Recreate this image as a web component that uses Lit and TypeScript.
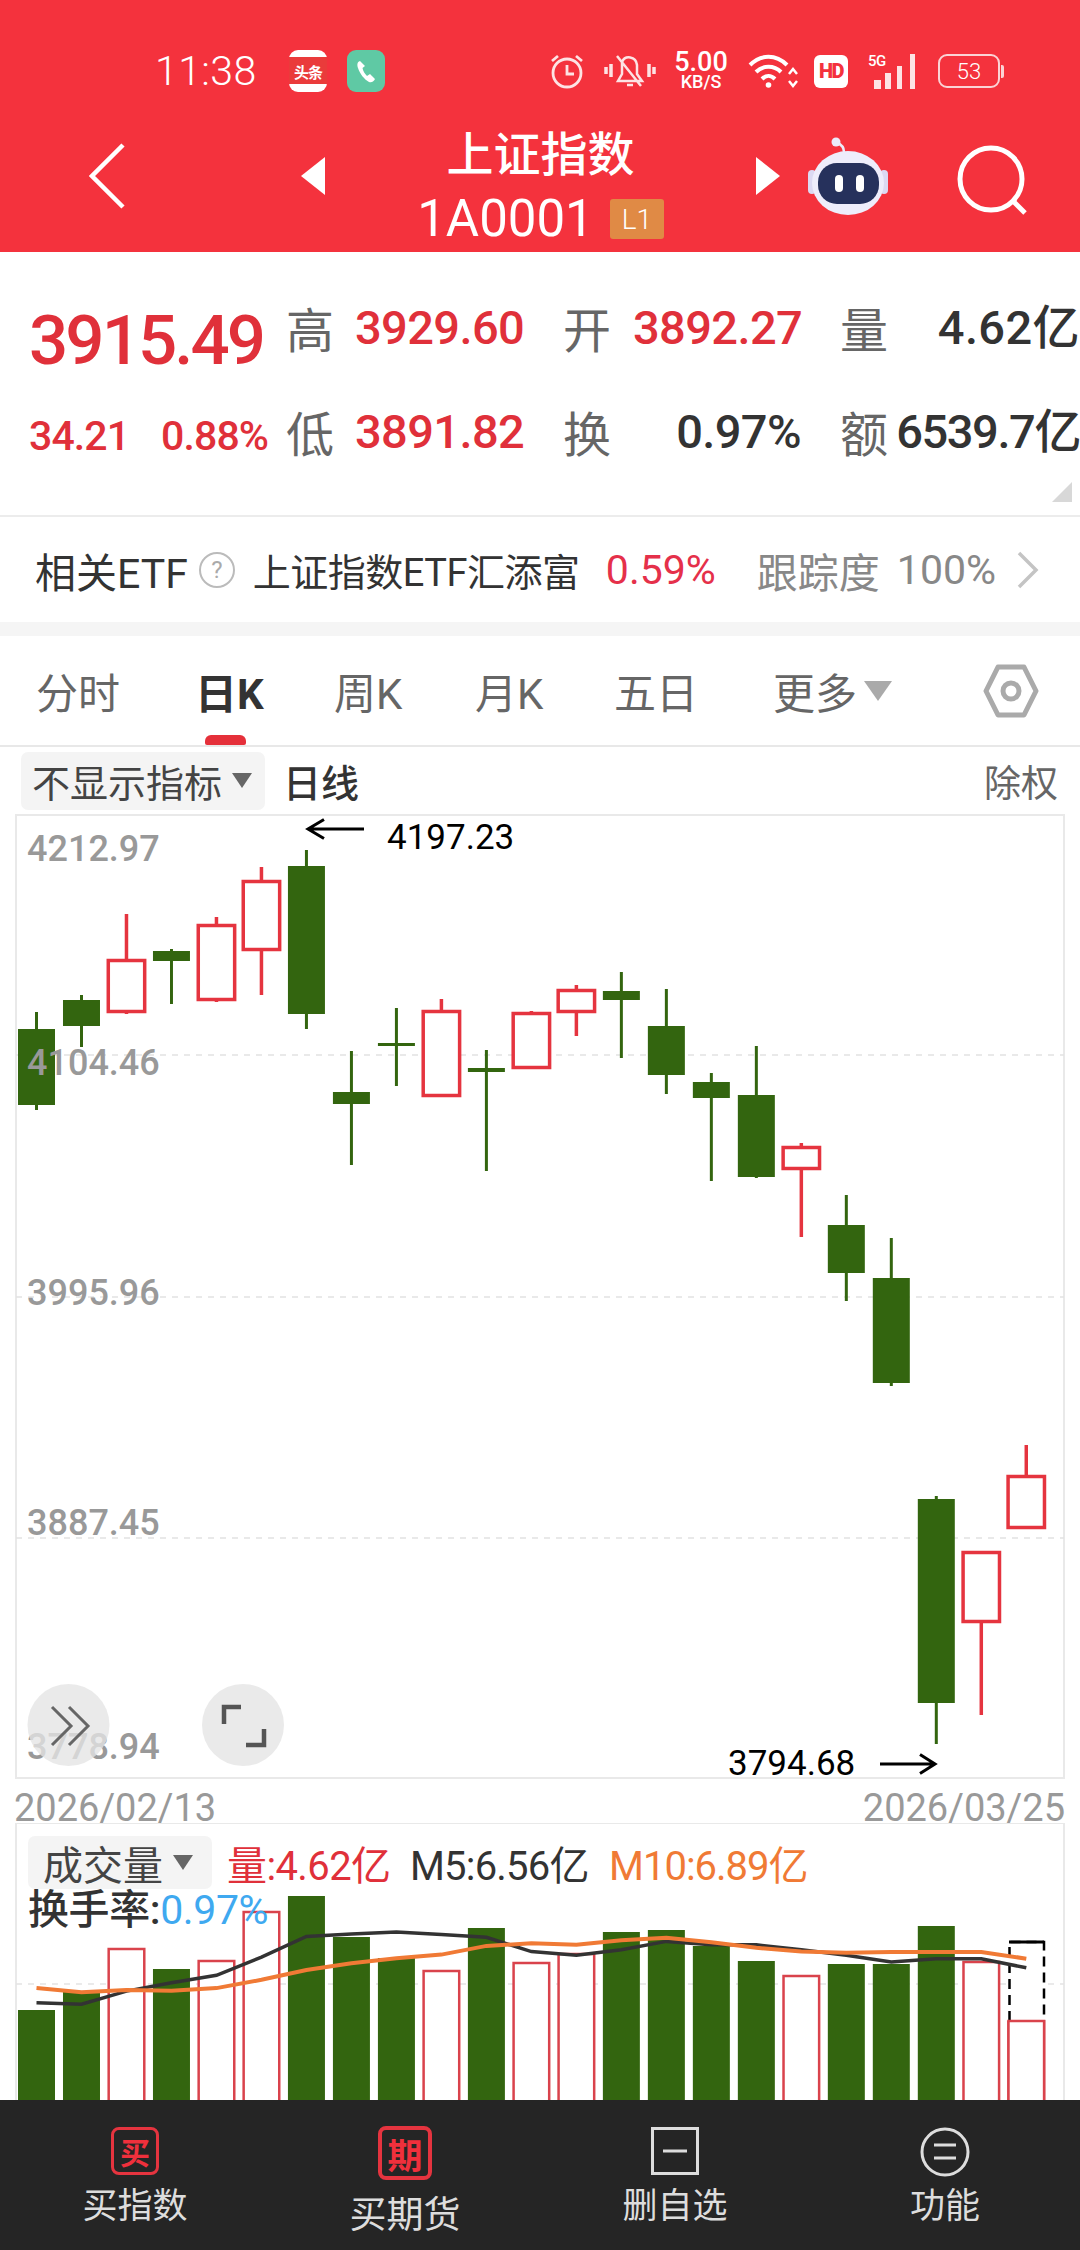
import { LitElement, html, svg, css } from "lit";
import { customElement } from "lit/decorators.js";

type C = [number, number, number, number, number]; // up?, wickTop, bodyTop, bodyBottom, wickBottom
const candles: C[] = [
  [0, 1012, 1029, 1105, 1110], [0, 995, 1000, 1026, 1047], [1, 914, 959, 1013, 1014],
  [0, 949, 951, 961, 1004], [1, 917, 924, 1001, 1002], [1, 867, 880, 951, 995],
  [0, 850, 866, 1014, 1029], [0, 1051, 1092, 1104, 1165], [0, 1008, 1043, 1046, 1086],
  [1, 999, 1010, 1097, 1097], [0, 1050, 1068, 1072, 1171], [1, 1011, 1012, 1069, 1069],
  [1, 985, 989, 1013, 1036], [0, 972, 991, 1000, 1058], [0, 989, 1026, 1075, 1094],
  [0, 1073, 1082, 1098, 1181], [0, 1046, 1095, 1177, 1178], [1, 1143, 1146, 1170, 1237],
  [0, 1195, 1225, 1273, 1301], [0, 1238, 1278, 1383, 1386], [0, 1496, 1499, 1703, 1744],
  [1, 1551, 1551, 1623, 1715], [1, 1445, 1475, 1529, 1529],
];
const cx = (i: number) => 36.5 + i * 44.99;
const volTops = [2010, 1991, 1948, 1969, 1960, 1911, 1896, 1937, 1958, 1970, 1928, 1962, 1953, 1932, 1930, 1946, 1961, 1975, 1964, 1964, 1926, 1961, 2021];
const m5z = [911, 915, 880, 858, 838, 790, 735, 728, 723, 730, 737, 775, 785, 770, 748, 757, 757, 770, 785, 803, 794, 794, 818];
const m10z = [872, 883, 877, 879, 872, 850, 824, 806, 793, 783, 760, 753, 757, 745, 738, 750, 765, 775, 778, 776, 776, 776, 794];
const line = (z: number[]) => z.map((v, i) => `${cx(i).toFixed(1)},${(1660 + v / 2.658).toFixed(1)}`).join(" ");
const GREEN = "#33650f";
const RED = "#e5343f";

@customElement("app-root")
export class AppRoot extends LitElement {
  static styles = css`
    :host { display: block; width: 1080px; height: 2250px; overflow: hidden; background: #fff; font-family: Roboto, "Noto Sans CJK SC", sans-serif; color: #333; }
    svg { display: block; }
    .header { height: 252px; background: #f4323d; color: #fff; }
    .status { height: 58px; padding: 42px 0 0 155px; display: flex; align-items: center; }
    .time { font-size: 41px; font-weight: 300; width: 134px; letter-spacing: 0.4px; }
    .app { width: 38px; height: 42px; border-radius: 9px; margin-right: 20px; display: flex; align-items: center; justify-content: center; }
    .toutiao { background: linear-gradient(#fff 0 7px, #ea3b3b 7px 34px, #fff 34px); color: #fff; font-size: 15px; font-weight: 700; letter-spacing: -1px; }
    .phone { background: #5fc9a4; }
    .right { display: flex; align-items: center; margin-left: 144px; }
    .speed { width: 58px; margin: 0 0 0 15px; display: flex; flex-direction: column; align-items: center; line-height: 1; font-weight: 500; }
    .speed b { font-size: 27px; font-weight: 500; line-height: 22px; }
    .speed i { font-size: 18px; font-style: normal; line-height: 18px; }
    .hd { width: 34px; height: 33px; background: #fff; border-radius: 6px; color: #f4323d; font-size: 20px; font-weight: 900; display: flex; align-items: center; justify-content: center; letter-spacing: -1.5px; margin-left: 16px; }
    .sig { width: 50px; height: 36px; margin-left: 20px; position: relative; }
    .sig span { position: absolute; left: 0; top: 0; font-size: 15px; font-weight: 500; line-height: 16px; letter-spacing: -0.5px; }
    .batt { margin-left: 20px; width: 62px; height: 34px; box-sizing: border-box; border: 2.5px solid #fbd3d5; border-radius: 9px; font-size: 22px; font-weight: 300; display: flex; align-items: center; justify-content: center; }
    .nub { width: 3px; height: 13px; background: #fbd3d5; margin-left: 1px; border-radius: 0 2px 2px 0; }
    .nav { height: 152px; display: flex; align-items: center; padding-left: 89px; }
    .mid { width: 431px; height: 152px; margin-left: 0; display: flex; flex-direction: column; align-items: center; }
    .name { font-size: 47px; line-height: 54px; margin-top: 28px; font-weight: 500; }
    .code { display: flex; align-items: center; margin-top: 10px; height: 54px; }
    .code span { font-size: 51px; font-weight: 400; line-height: 54px; }
    .l1 { width: 54px; height: 40px; margin-left: 16px; background: #e08a45; border-radius: 3px; font-size: 28px; font-weight: 300; display: flex; align-items: center; justify-content: center; }
    .robot { margin-left: 28px; }
    .search { margin: 12px 0 0 68px; }
    .quote { position: relative; height: 265px; box-sizing: border-box; border-bottom: 2px solid #ececec; padding: 45px 0 0 30px; display: grid; grid-template-columns: 256px 69px 208px 70px 207px 48px 192px; grid-template-rows: 60px 66px; row-gap: 41px; align-items: center; }
    .big { font-size: 69px; font-weight: 500; color: #e0303a; letter-spacing: -2.9px; line-height: 1; margin-top: 26px; margin-left: -1px; }
    .chg { display: flex; gap: 32px; font-size: 41px; color: #e0303a; letter-spacing: -0.9px; font-weight: 500; margin-top: 10px; margin-left: -1px; }
    .lab { font-size: 48px; color: #666; }
    .val { font-size: 47px; font-weight: 500; letter-spacing: -0.6px; line-height: 1; }
    .up { color: #e0303a; }
    .dark { color: #333; }
    .ra { text-align: right; }
    .pr { padding-right: 39px; }
    .last { white-space: nowrap; letter-spacing: 0.4px; }
    .tight { letter-spacing: -1.4px; }
    .corner { position: absolute; right: 8px; bottom: 13px; width: 20px; height: 20px; background: #d8d8d8; clip-path: polygon(100% 0, 100% 100%, 0 100%); }
    .etf { height: 105px; padding-left: 35px; display: flex; align-items: center; font-size: 41px; color: #333; }
    .help { width: 36px; height: 36px; margin: 0 18px 0 11px; box-sizing: border-box; border: 2px solid #bbb; border-radius: 50%; font-size: 24px; color: #aaa; display: flex; align-items: center; justify-content: center; }
    .ename { width: 353px; font-size: 38px; letter-spacing: -0.5px; white-space: nowrap; }
    .pct { width: 151px; color: #e5304a; }
    .grey { color: #888; }
    .track { width: 140px; }
    .hundred { width: 120px; }
    .band { height: 14px; background: #f5f5f5; }
    .tabs { height: 111px; box-sizing: border-box; border-bottom: 2px solid #e8e8e8; padding-left: 36px; display: grid; grid-template-columns: 160px 138px 141px 139px 159px 210px 1fr; align-items: center; font-size: 42px; color: #666; }
    .tab { position: relative; height: 109px; display: flex; align-items: center; white-space: nowrap; }
    .on { color: #333; font-weight: 700; margin-left: -1px; }
    .bar { position: absolute; left: 10px; bottom: 0; width: 41px; height: 10px; background: #e5303a; border-radius: 6px 6px 2px 2px; }
    .tri { width: 0; height: 0; border-left: 14px solid transparent; border-right: 14px solid transparent; border-top: 20px solid #aaa; margin-left: 7px; }
    .ind { height: 67px; display: flex; align-items: center; padding-left: 21px; padding-right: 22px; }
    .pill { background: #f4f4f4; border-radius: 7px; display: flex; align-items: center; color: #444; }
    .indpill { width: 244px; height: 58px; box-sizing: border-box; padding-left: 11px; font-size: 38px; white-space: nowrap; }
    .smalltri { width: 0; height: 0; border-left: 10px solid transparent; border-right: 10px solid transparent; border-top: 15px solid #666; margin-left: 10px; }
    .line { margin-left: 18px; font-size: 38px; font-weight: 500; color: #333; }
    .ex { margin-left: auto; font-size: 37px; color: #666; }
    .kline { position: relative; margin: 0 15px; width: 1050px; height: 965px; overflow: visible; }
    .axis { font-size: 36px; font-weight: 500; fill: #999; }
    .mark { font-size: 35px; fill: #000; }
    .dates { height: 44px; box-sizing: border-box; padding-top: 14px; margin: 0 15px 0 14px; display: flex; justify-content: space-between; align-items: flex-start; font-size: 38px; line-height: 30px; color: #999; }
    .vol { position: relative; margin: 0 15px; width: 1050px; height: 277px; overflow: hidden; }
    .legend { position: absolute; left: 13px; top: 13px; }
    .lrow { display: flex; align-items: center; font-size: 40px; height: 53px; white-space: nowrap; }
    .volpill { width: 184px; height: 53px; box-sizing: border-box; padding-left: 15px; margin-right: 15px; }
    .m1 { color: #e0303a; width: 183px; letter-spacing: -0.6px; }
    .m5 { color: #333; width: 199px; letter-spacing: -0.8px; }
    .m10 { color: #f07a35; letter-spacing: -1px; }
    .lrow2 { font-size: 41px; height: 40px; line-height: 42px; color: #333; font-weight: 500; white-space: nowrap; letter-spacing: -0.4px; }
    .lrow2 span { color: #3fa9f0; font-weight: 400; }
    .foot { height: 150px; background: #252525; display: grid; grid-template-columns: repeat(4, 270px); color: #ddd; }
    .fi { display: flex; flex-direction: column; align-items: center; padding-top: 27px; }
    .fi2 { padding-top: 26px; }
    .fl { font-size: 35px; line-height: 42px; margin-top: 11px; }
    .fl2 { margin-top: 9px; }
    .clip { font-size: 37px; line-height: 44px; height: 37px; margin-top: 14px; overflow: hidden; }
    .ficon { box-sizing: border-box; width: 48px; height: 48px; border: 3px solid #e5343f; border-radius: 8px; color: #f0303c; font-size: 30px; font-weight: 700; display: flex; align-items: center; justify-content: center; }
    .ficon2 { width: 54px; height: 54px; border-width: 4px; font-size: 35px; }
    .ml18 { margin-left: 18px; }
    .ml176 { margin-left: 176px; }
  `;

  private kline() {
    return html`<svg class="kline" viewBox="15 814 1050 965" width="1050" height="965">
      <rect x="16" y="815" width="1048" height="963" fill="#fff" stroke="#e9e9e9" stroke-width="2"></rect>
      ${[1055, 1297, 1538].map((y) => svg`<line x1="16" x2="1064" y1=${y} y2=${y} stroke="#e2e2e2" stroke-width="1.5" stroke-dasharray="6 6"></line>`)}
      ${candles.map((c, i) => {
        const x = cx(i);
        const col = c[0] ? RED : GREEN;
        const sw = c[0] ? 3.5 : 3;
        const h = Math.max(c[3] - c[2], 1);
        return svg`
          <line x1=${x} x2=${x} y1=${c[1]} y2=${c[2]} stroke=${col} stroke-width=${sw}></line>
          <line x1=${x} x2=${x} y1=${c[3]} y2=${c[4]} stroke=${col} stroke-width=${sw}></line>
          ${c[0]
            ? svg`<rect x=${x - 18.2} y=${c[2] + 1.5} width="36.4" height=${h - 3} fill="#fff" stroke=${col} stroke-width="3.5"></rect>`
            : svg`<rect x=${x - 18.5} y=${c[2]} width="37" height=${h} fill=${col}></rect>`}`;
      })}
      <text class="axis" x="27" y="861">4212.97</text>
      <text class="axis" x="27" y="1075">4104.46</text>
      <text class="axis" x="27" y="1305">3995.96</text>
      <text class="axis" x="27" y="1535">3887.45</text>
      <text class="axis" x="27" y="1759">3778.94</text>
      <text class="mark" x="387" y="849">4197.23</text>
      <text class="mark" x="728" y="1775">3794.68</text>
      <path d="M364 829H308M324 819.5L308 829L324 838.5" fill="none" stroke="#000" stroke-width="3"></path>
      <path d="M880 1764H935M920 1754.5L935 1764L920 1773.5" fill="none" stroke="#000" stroke-width="3"></path>
      <circle cx="68.5" cy="1725" r="41" fill="#e4e4e4" fill-opacity="0.78"></circle>
      <circle cx="243" cy="1725" r="41" fill="#e4e4e4" fill-opacity="0.78"></circle>
      <path d="M52 1707L71 1726L52 1745M69 1707L88 1726L69 1745" fill="none" stroke="#666" stroke-width="3"></path>
      <path d="M224 1724V1707H241M264 1729V1745H246" fill="none" stroke="#555" stroke-width="4.5"></path>
    </svg>`;
  }

  private volume() {
    return html`<svg viewBox="15 1823 1050 277" width="1050" height="277">
      <path d="M16 1823H1064M16 1823V2100M1064 1823V2100" fill="none" stroke="#e9e9e9" stroke-width="2"></path>
      <line x1="16" x2="1064" y1="1984" y2="1984" stroke="#e4e4e4" stroke-width="1.5" stroke-dasharray="6 6"></line>
      ${candles.map((c, i) => {
        const x = cx(i);
        const t = volTops[i];
        return c[0]
          ? svg`<rect x=${x - 17.8} y=${t + 1} width="35.6" height=${2110 - t} fill="#fff" stroke="#d9434c" stroke-width="2.5"></rect>`
          : svg`<rect x=${x - 18.5} y=${t} width="37" height=${2110 - t} fill=${GREEN}></rect>`;
      })}
      <path d="M1009.5 2021V1942H1044V2021" fill="#fff" stroke="#000" stroke-width="2.5" stroke-dasharray="10 6"></path>
      <path d="M1009 1942H1044" stroke="#000" stroke-width="3"></path>
      <rect x=${cx(22) - 17.8} y="2021" width="35.6" height="90" fill="#fff" stroke="#d9434c" stroke-width="2.5"></rect>
      <polyline points=${line(m5z)} fill="none" stroke="#333" stroke-width="3.5"></polyline>
      <polyline points=${line(m10z)} fill="none" stroke="#f07a35" stroke-width="4"></polyline>
    </svg>`;
  }

  render() {
    return html`
      <div class="header">
        <div class="status">
          <div class="time">11:38</div>
          <div class="app toutiao">头条</div>
          <div class="app phone">
            <svg width="22" height="26" viewBox="0 0 22 26"><path d="M5 3C2 4 2 7 3 10C5 16 9 21 14 24C17 25 19 23 20 21L15 16L12 18C10 16 8 13 7.500 10L10 8Z" fill="#fff"></path></svg>
          </div>
          <div class="right">
            <svg width="36" height="36" viewBox="0 0 36 36" fill="none" stroke="#fde3e4" stroke-width="2.800"><circle cx="18" cy="20" r="14"></circle><path d="M18 12V21H25M3 8L9 3M33 8L27 3"></path></svg>
            <svg class="ml18" width="54" height="40" viewBox="0 0 54 40" fill="none" stroke="#fde3e4" stroke-width="2.500"><path d="M15 30H39L34 23V14C33 5 22 4 19 11V23ZM24 34H30M14 5L38 35"></path><path d="M3 16V23M8 13V26M46 13V26M51 16V23" stroke-width="3.500"></path></svg>
            <div class="speed"><b>5.00</b><i>KB/S</i></div>
            <svg class="ml18" width="50" height="36" viewBox="0 0 50 36" fill="none" stroke="#fff" stroke-width="4"><path d="M2 12C13 1 28 1 39 12M8 19C15 12 26 12 33 19M14 26C18 22 23 22 27 26"></path><circle cx="20.500" cy="32" r="2.800" fill="#fff" stroke="none"></circle><path d="M41 21L45 16L49 21M41 28L45 33L49 28" stroke-width="2.500"></path></svg>
            <div class="hd">HD</div>
            <div class="sig"><span>5G</span>
              <svg width="50" height="36" viewBox="0 0 50 36" fill="#fde3e4"><rect x="6" y="27" width="7" height="9"></rect><rect x="17" y="20" width="6" height="16"></rect><rect x="29" y="13" width="5" height="23"></rect><rect x="42" y="1" width="5" height="35"></rect></svg>
            </div>
            <div class="batt">53</div><div class="nub"></div>
          </div>
        </div>
        <div class="nav">
          <svg width="36" height="66" viewBox="0 0 36 66" fill="none" stroke="#fff" stroke-width="4.500"><path d="M34 2L3 33L34 64"></path></svg>
          <svg class="ml176" width="24" height="38" viewBox="0 0 24 38"><path d="M24 0V38L0 19Z" fill="#fff"></path></svg>
          <div class="mid">
            <div class="name">上证指数</div>
            <div class="code"><span>1A0001</span><div class="l1">L1</div></div>
          </div>
          <svg width="24" height="38" viewBox="0 0 24 38"><path d="M0 0V38L24 19Z" fill="#fff"></path></svg>
          <svg class="robot" width="80" height="78" viewBox="0 0 80 78">
            <path d="M36 15C36 9 32 7 29 6" fill="none" stroke="#ecebfa" stroke-width="2.500"></path>
            <circle cx="28" cy="5" r="4.500" fill="#ecebfa"></circle>
            <rect x="0" y="33" width="8" height="24" rx="4" fill="#dcd9f2"></rect>
            <rect x="72" y="33" width="8" height="24" rx="4" fill="#dcd9f2"></rect>
            <ellipse cx="40" cy="46" rx="36" ry="32" fill="#eeedfb"></ellipse>
            <rect x="10" y="26" width="61" height="41" rx="19" fill="#26315c"></rect>
            <rect x="27" y="38" width="8" height="17" rx="4" fill="#fff"></rect>
            <rect x="48" y="38" width="8" height="17" rx="4" fill="#fff"></rect>
          </svg>
          <svg class="search" width="76" height="74" viewBox="0 0 76 74" fill="none" stroke="#fff" stroke-width="5"><circle cx="35" cy="34" r="31"></circle><path d="M57 56L69 68"></path></svg>
        </div>
      </div>

      <div class="quote">
        <div class="big">3915.49</div>
        <div class="lab">高</div><div class="val up">3929.60</div>
        <div class="lab">开</div><div class="val up">3892.27</div>
        <div class="lab">量</div><div class="val dark ra last">4.62亿</div>
        <div class="chg"><span>34.21</span><span>0.88%</span></div>
        <div class="lab">低</div><div class="val up">3891.82</div>
        <div class="lab">换</div><div class="val dark ra pr">0.97%</div>
        <div class="lab">额</div><div class="val dark ra last tight">6539.7亿</div>
        <div class="corner"></div>
      </div>

      <div class="etf">
        <span>相关ETF</span><span class="help">?</span>
        <span class="ename">上证指数ETF汇添富</span>
        <span class="pct">0.59%</span>
        <span class="grey track">跟踪度</span>
        <span class="grey hundred">100%</span>
        <svg width="22" height="38" viewBox="0 0 22 38" fill="none" stroke="#c4c4c4" stroke-width="3.500"><path d="M2 2L19 19L2 36"></path></svg>
      </div>
      <div class="band"></div>

      <div class="tabs">
        <div class="tab">分时</div>
        <div class="tab on">日K<div class="bar"></div></div>
        <div class="tab">周K</div>
        <div class="tab">月K</div>
        <div class="tab">五日</div>
        <div class="tab">更多<span class="tri"></span></div>
        <svg width="56" height="54" viewBox="0 0 56 54" fill="none" stroke="#aaa" stroke-width="5"><path d="M15 3H41L53 27L41 51H15L3 27Z" stroke-linejoin="round"></path><circle cx="28" cy="27" r="8"></circle></svg>
      </div>

      <div class="ind">
        <div class="pill indpill">不显示指标<span class="smalltri"></span></div>
        <span class="line">日线</span>
        <span class="ex">除权</span>
      </div>

      ${this.kline()}

      <div class="dates"><span>2026/02/13</span><span>2026/03/25</span></div>

      <div class="vol">
        ${this.volume()}
        <div class="legend">
          <div class="lrow">
            <div class="pill volpill">成交量<span class="smalltri"></span></div>
            <span class="m1">量:4.62亿</span><span class="m5">M5:6.56亿</span><span class="m10">M10:6.89亿</span>
          </div>
          <div class="lrow2">换手率:<span>0.97%</span></div>
        </div>
      </div>

      <div class="foot">
        <div class="fi"><div class="ficon">买</div><div class="fl">买指数</div></div>
        <div class="fi fi2"><div class="ficon ficon2">期</div><div class="clip">买期货</div></div>
        <div class="fi">
          <svg width="48" height="48" viewBox="0 0 48 48" fill="none" stroke="#ddd" stroke-width="3"><rect x="1.500" y="1.500" width="45" height="45"></rect><path d="M12 24H36"></path></svg>
          <div class="fl">删自选</div>
        </div>
        <div class="fi">
          <svg width="50" height="50" viewBox="0 0 50 50" fill="none" stroke="#ddd" stroke-width="3"><circle cx="25" cy="25" r="23"></circle><path d="M14 18H36M14 31H36"></path></svg>
          <div class="fl fl2">功能</div>
        </div>
      </div>
    `;
  }
}
